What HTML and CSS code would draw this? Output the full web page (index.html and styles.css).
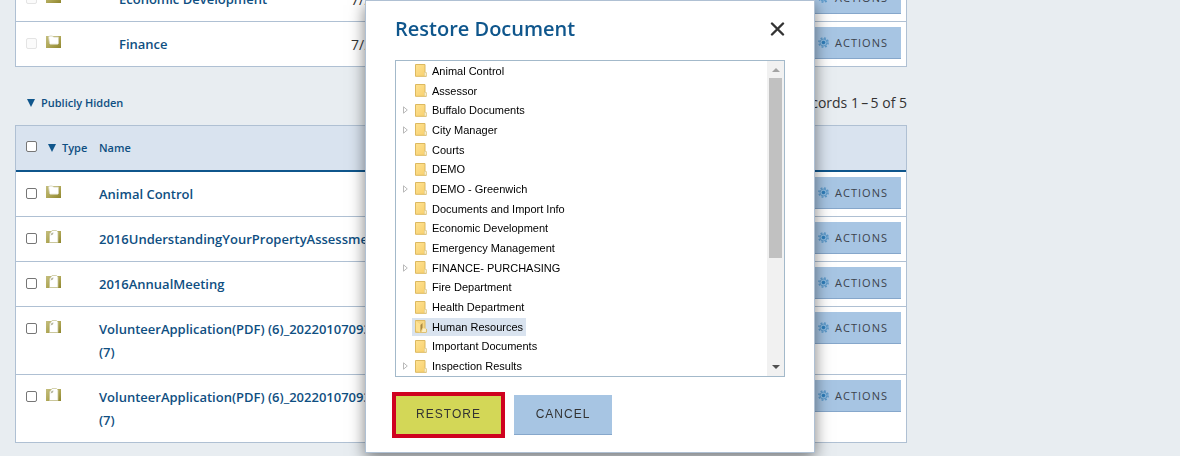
FILE: index.html
```html
<!DOCTYPE html>
<html lang="en">
<head>
<meta charset="utf-8">
<title>Document Center</title>
<link rel="stylesheet" href="styles.css">
</head>
<body>
<svg class="sprite" aria-hidden="true">
  <defs>
    <linearGradient id="olive" x1="0" y1="0" x2="1" y2="1"><stop offset="0" stop-color="#c4be7e"/><stop offset=".5" stop-color="#b0a858"/><stop offset="1" stop-color="#8f852c"/></linearGradient>
    <linearGradient id="yellow" x1="0" y1="0" x2="1" y2="1"><stop offset="0" stop-color="#ffe291"/><stop offset="1" stop-color="#f7cf6c"/></linearGradient>
    <symbol id="folder" viewBox="0 0 15 13">
      <path d="M0 1h15v12H0z" fill="url(#olive)"/>
      <path d="M2.500 2 3.500 1h3l1 1h5v6.500l-.8.8H4.300l-.8-.8z" fill="#fff" stroke="#d3d0b2" stroke-width=".8"/>
    </symbol>
    <symbol id="page" viewBox="0 0 15 13">
      <path d="M0 1h15v12H0z" fill="url(#olive)"/>
      <path d="M3.500 12.500V4L6 .500h4.500l1.500 1.500v10.500z" fill="#fff" stroke="#c9c69c" stroke-width=".8"/>
      <path d="M4.500 5.500 5.500 3l2-.5-.5 2z" fill="#b5b59f"/>
    </symbol>
    <symbol id="tree-folder" viewBox="0 0 12 13">
      <path d="M.500.500h9.500v8l1.300.5v3.300H.500z" fill="url(#yellow)" stroke="#dcb960"/>
      <path d="M9.500 8.500h2v3.500h-2z" fill="#fbeec7" stroke="#dfcd98" stroke-width=".6"/>
    </symbol>
    <symbol id="tree-open" viewBox="0 0 12 13">
      <path d="M.500.500h9.500v8l1.300.5v3.300H.500z" fill="#f6d681" stroke="#dcb960"/>
      <path d="M.800 1 5 4v8.500l-4-2z" fill="#ffe291"/>
      <path d="M7.500 3v4.500L5.500 12V5z" fill="#a88743"/>
      <path d="M8 8.500h3v3.500H6.800z" fill="#fbeec7"/>
    </symbol>
    <symbol id="arrow" viewBox="0 0 5 8"><path d="M.500.800v6.400L4.300 4z" fill="#fff" stroke="#b9b9b9"/></symbol>
    <symbol id="gear" viewBox="0 0 11 11">
      <circle cx="5.500" cy="5.500" r="4.600" fill="none" stroke="#5d9acb" stroke-width="1.600" stroke-dasharray="1.900 1.710"/>
      <circle cx="5.500" cy="5.500" r="3.500" fill="#8dbbe0" stroke="#5d9acb" stroke-width="1"/>
      <circle cx="5.500" cy="5.500" r="1.800" fill="#2f7ebb"/>
    </symbol>
  </defs>
</svg>

<main class="page">
  <table class="docs">
    <colgroup><col class="c-check"><col class="c-type"><col class="c-name"><col class="c-date"><col class="c-act"></colgroup>
    <tbody>
      <tr><td><input type="checkbox" class="check" disabled aria-label="Select Economic Development"></td><td><svg class="type-icon"><use href="#folder"/></svg></td><td class="nested"><a href="#">Economic Development</a></td><td class="date">7/2</td><td class="act"><button class="actions" type="button"><svg class="gear"><use href="#gear"/></svg>ACTIONS</button></td></tr>
      <tr><td><input type="checkbox" class="check" disabled aria-label="Select Finance"></td><td><svg class="type-icon"><use href="#folder"/></svg></td><td class="nested"><a href="#">Finance</a></td><td class="date">7/2</td><td class="act"><button class="actions" type="button"><svg class="gear"><use href="#gear"/></svg>ACTIONS</button></td></tr>
    </tbody>
  </table>

  <div class="section-bar">
    <h2 class="section-title"><a href="#"><svg class="caret" viewBox="0 0 8 8"><path d="M0 0h8L4 8z"/></svg>Publicly Hidden</a></h2>
    <span class="records">Records 1&#8201;–&#8201;5 of 5</span>
  </div>

  <table class="docs">
    <colgroup><col class="c-check"><col class="c-type"><col class="c-hidden-name"><col><col class="c-act"></colgroup>
    <thead>
      <tr><th><input type="checkbox" class="check" aria-label="Select all"></th><th><a href="#"><svg class="caret" viewBox="0 0 8 8"><path d="M0 0h8L4 8z"/></svg>Type</a></th><th><a href="#">Name</a></th><th></th><th></th></tr>
    </thead>
    <tbody>
      <tr><td><input type="checkbox" class="check" aria-label="Select Animal Control"></td><td><svg class="type-icon"><use href="#folder"/></svg></td><td><a href="#">Animal Control</a></td><td></td><td class="act"><button class="actions" type="button"><svg class="gear"><use href="#gear"/></svg>ACTIONS</button></td></tr>
      <tr><td><input type="checkbox" class="check" aria-label="Select 2016 assessment"></td><td><svg class="type-icon"><use href="#page"/></svg></td><td><a href="#">2016UnderstandingYourPropertyAssessment</a></td><td></td><td class="act"><button class="actions" type="button"><svg class="gear"><use href="#gear"/></svg>ACTIONS</button></td></tr>
      <tr><td><input type="checkbox" class="check" aria-label="Select 2016AnnualMeeting"></td><td><svg class="type-icon"><use href="#page"/></svg></td><td><a href="#">2016AnnualMeeting</a></td><td></td><td class="act"><button class="actions" type="button"><svg class="gear"><use href="#gear"/></svg>ACTIONS</button></td></tr>
      <tr><td><input type="checkbox" class="check" aria-label="Select first VolunteerApplication"></td><td><svg class="type-icon"><use href="#page"/></svg></td><td><a href="#">VolunteerApplication(PDF) (6)_20220107093 (7)</a></td><td></td><td class="act"><button class="actions" type="button"><svg class="gear"><use href="#gear"/></svg>ACTIONS</button></td></tr>
      <tr><td><input type="checkbox" class="check" aria-label="Select second VolunteerApplication"></td><td><svg class="type-icon"><use href="#page"/></svg></td><td><a href="#">VolunteerApplication(PDF) (6)_20220107093 (7)</a></td><td></td><td class="act"><button class="actions" type="button"><svg class="gear"><use href="#gear"/></svg>ACTIONS</button></td></tr>
    </tbody>
  </table>
</main>

<div class="overlay">
  <section class="modal" role="dialog" aria-labelledby="modal-title">
    <header class="modal-head">
      <h1 id="modal-title" class="modal-title">Restore Document</h1>
      <button class="close" type="button" aria-label="Close"><svg class="close-icon" viewBox="0 0 14 14"><path d="M1.500 1.500l11 11M12.500 1.500l-11 11"/></svg></button>
    </header>
    <div class="tree-box">
      <ul class="tree">
        <li class="node"><span class="toggle"></span><a href="#" class="label"><svg class="tree-icon"><use href="#tree-folder"/></svg>Animal Control</a></li>
        <li class="node"><span class="toggle"></span><a href="#" class="label"><svg class="tree-icon"><use href="#tree-folder"/></svg>Assessor</a></li>
        <li class="node"><svg class="toggle"><use href="#arrow"/></svg><a href="#" class="label"><svg class="tree-icon"><use href="#tree-folder"/></svg>Buffalo Documents</a></li>
        <li class="node"><svg class="toggle"><use href="#arrow"/></svg><a href="#" class="label"><svg class="tree-icon"><use href="#tree-folder"/></svg>City Manager</a></li>
        <li class="node"><span class="toggle"></span><a href="#" class="label"><svg class="tree-icon"><use href="#tree-folder"/></svg>Courts</a></li>
        <li class="node"><span class="toggle"></span><a href="#" class="label"><svg class="tree-icon"><use href="#tree-folder"/></svg>DEMO</a></li>
        <li class="node"><svg class="toggle"><use href="#arrow"/></svg><a href="#" class="label"><svg class="tree-icon"><use href="#tree-folder"/></svg>DEMO - Greenwich</a></li>
        <li class="node"><span class="toggle"></span><a href="#" class="label"><svg class="tree-icon"><use href="#tree-folder"/></svg>Documents and Import Info</a></li>
        <li class="node"><span class="toggle"></span><a href="#" class="label"><svg class="tree-icon"><use href="#tree-folder"/></svg>Economic Development</a></li>
        <li class="node"><span class="toggle"></span><a href="#" class="label"><svg class="tree-icon"><use href="#tree-folder"/></svg>Emergency Management</a></li>
        <li class="node"><svg class="toggle"><use href="#arrow"/></svg><a href="#" class="label"><svg class="tree-icon"><use href="#tree-folder"/></svg>FINANCE- PURCHASING</a></li>
        <li class="node"><span class="toggle"></span><a href="#" class="label"><svg class="tree-icon"><use href="#tree-folder"/></svg>Fire Department</a></li>
        <li class="node"><span class="toggle"></span><a href="#" class="label"><svg class="tree-icon"><use href="#tree-folder"/></svg>Health Department</a></li>
        <li class="node"><span class="toggle"></span><a href="#" class="label selected"><svg class="tree-icon"><use href="#tree-open"/></svg>Human Resources</a></li>
        <li class="node"><span class="toggle"></span><a href="#" class="label"><svg class="tree-icon"><use href="#tree-folder"/></svg>Important Documents</a></li>
        <li class="node"><svg class="toggle"><use href="#arrow"/></svg><a href="#" class="label"><svg class="tree-icon"><use href="#tree-folder"/></svg>Inspection Results</a></li>
      </ul>
      <div class="scrollbar" aria-hidden="true">
        <svg class="scroll-arrow" viewBox="0 0 17 17"><path d="M5 11h8L9 7z" fill="#a3a3a3"/></svg>
        <div class="thumb"></div>
        <svg class="scroll-arrow scroll-down" viewBox="0 0 17 17"><path d="M5 6h8l-4 4z" fill="#505050"/></svg>
      </div>
    </div>
    <footer class="modal-foot">
      <button class="btn restore" type="button">RESTORE</button>
      <button class="btn cancel" type="button">CANCEL</button>
    </footer>
  </section>
</div>
</body>
</html>
```
FILE: styles.css
```css
* { box-sizing: border-box; }
body {
  margin: 0;
  height: 100vh;
  overflow: hidden;
  background: #e8edf1;
  color: #333;
  font-family: "Open Sans", "Noto Sans", sans-serif;
}
a { color: #0f4f82; text-decoration: none; }
button { font: inherit; cursor: pointer; }
.sprite { position: absolute; width: 0; height: 0; }

/* The document list is scrolled so that its first row is cut off */
.page { max-width: 907px; padding-left: 15px; margin-top: -24px; }

.docs {
  width: 100%;
  table-layout: fixed;
  border-collapse: separate;
  border-spacing: 0;
  border: 1px solid #afc0d3;
  border-bottom: 0;
  background: #fff;
  font-size: 13px;
  font-weight: 600;
  line-height: 23px;
}
.docs td, .docs th {
  padding: 11px 0 10px;
  border-bottom: 1px solid #afc0d3;
  text-align: left;
  vertical-align: top;
}
.docs th {
  padding: 10px 0 11px;
  background: #d9e3ef;
  border-bottom: 2px solid #0f568c;
  font-size: 11px;
  font-weight: 600;
  white-space: nowrap;
}
.docs td:first-child, .docs th:first-child { padding-left: 10px; }
.c-check { width: 30px; }
.c-type { width: 53px; }
.c-name { width: 252px; }
.c-hidden-name { width: 284px; }
.c-act { width: 120px; }
.docs .nested { padding-left: 20px; }
.docs .date { font-weight: 400; font-size: 14px; }
.docs .act { padding: 5px 5px 0; text-align: right; }

.check {
  appearance: none;
  display: block;
  width: 11px;
  height: 11px;
  margin: 5px 0;
  border: 1px solid #767676;
  border-radius: 2px;
  background: #fff;
}
.check:disabled { border-color: #e4e4e4; background: #fbfbfb; }
.type-icon { display: block; width: 15px; height: 13px; margin-top: 2px; }
.caret { width: 8px; height: 8px; margin-right: 6px; fill: #0f568c; }
th .caret { margin-left: 2px; }

.actions {
  display: inline-flex;
  align-items: center;
  gap: 6px;
  height: 32px;
  padding: 0 13px 1px 14px;
  border: 0;
  border-bottom: 1px solid #86a7cb;
  background: #a7c5e3;
  color: #3c434d;
  font-size: 11px;
  font-weight: 400;
  letter-spacing: 1px;
}
.gear { width: 11px; height: 11px; }

.section-bar {
  display: flex;
  align-items: center;
  justify-content: space-between;
  padding: 24px 0 11px 12px;
}
.section-title { margin: 0; font-size: 11px; font-weight: 600; line-height: 23px; }
.records { font-size: 14px; line-height: 23px; }

.overlay {
  position: fixed;
  inset: 0;
  display: flex;
  justify-content: center;
  align-items: flex-start;
}
.modal {
  width: 450px;
  padding: 12px 29px 14px;
  border: 1px solid #afc0d3;
  background: #fff;
  box-shadow: 0 5px 15px rgba(0, 0, 0, .5);
}
.modal-head {
  display: flex;
  align-items: center;
  justify-content: space-between;
  margin-bottom: 15px;
}
.modal-title { margin: 0; color: #0f568c; font-size: 20px; font-weight: 600; line-height: 32px; }
.close { display: flex; padding: 0; border: 0; background: none; }
.close-icon { width: 15px; height: 14px; fill: none; stroke: #333; stroke-width: 2.400; stroke-linecap: round; }

.tree-box {
  display: flex;
  height: 317px;
  border: 1px solid #a3b9ca;
  font-family: "Liberation Sans", Arial, sans-serif;
  font-size: 11px;
  line-height: 18px;
}
.tree {
  flex: 1;
  display: grid;
  grid-template-rows: repeat(16, 1fr);
  margin: 0;
  padding: 0 0 0 7px;
  list-style: none;
}
.node { display: flex; align-items: center; gap: 7px; min-height: 0; }
.toggle { width: 5px; height: 8px; }
.label { display: flex; align-items: center; gap: 5px; color: #000; }
.tree-icon { width: 12px; height: 13px; }
.selected { margin-left: -3px; padding: 0 3px; background: #d9e3ef; }

.scrollbar { display: flex; flex-direction: column; width: 17px; background: #f1f1f1; }
.scroll-arrow { width: 17px; height: 17px; }
.thumb { height: 180px; margin: 0 2px; background: #c1c1c1; }
.scroll-down { margin-top: auto; }

.modal-foot {
  display: flex;
  align-items: center;
  gap: 9px;
  margin: 15px 0 0 -3px;
}
.btn {
  border: 0;
  padding: 0 0 2px;
  color: #333;
  font-family: "Liberation Sans", Arial, sans-serif;
  font-size: 12px;
  letter-spacing: 1px;
}
.restore { width: 113px; height: 46px; border: 4px solid #cf0220; background: #d3d757; }
.cancel { width: 98px; height: 40px; border-bottom: 1px solid #86a7cb; background: #a7c5e3; }
```
